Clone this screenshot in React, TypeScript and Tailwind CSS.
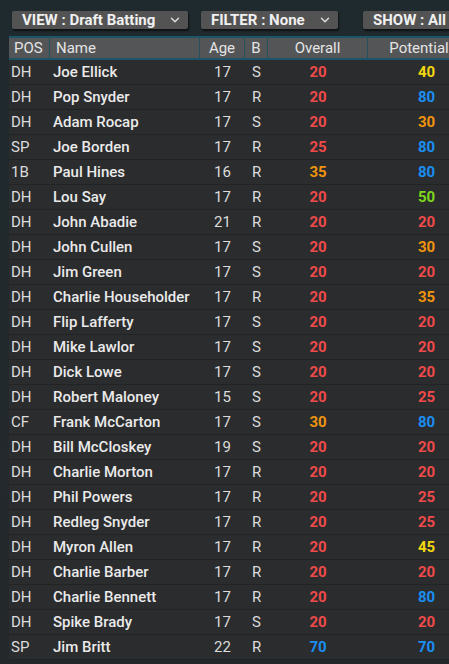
import { ChevronDown } from 'lucide-react';

type Player = [string, string, number, string, number, number];

const players: Player[] = [
    ['DH', 'Joe Ellick', 17, 'S', 20, 40],
    ['DH', 'Pop Snyder', 17, 'R', 20, 80],
    ['DH', 'Adam Rocap', 17, 'S', 20, 30],
    ['SP', 'Joe Borden', 17, 'R', 25, 80],
    ['1B', 'Paul Hines', 16, 'R', 35, 80],
    ['DH', 'Lou Say', 17, 'R', 20, 50],
    ['DH', 'John Abadie', 21, 'R', 20, 20],
    ['DH', 'John Cullen', 17, 'S', 20, 30],
    ['DH', 'Jim Green', 17, 'S', 20, 20],
    ['DH', 'Charlie Householder', 17, 'R', 20, 35],
    ['DH', 'Flip Lafferty', 17, 'S', 20, 20],
    ['DH', 'Mike Lawlor', 17, 'S', 20, 20],
    ['DH', 'Dick Lowe', 17, 'S', 20, 20],
    ['DH', 'Robert Maloney', 15, 'S', 20, 25],
    ['CF', 'Frank McCarton', 17, 'S', 30, 80],
    ['DH', 'Bill McCloskey', 19, 'S', 20, 20],
    ['DH', 'Charlie Morton', 17, 'R', 20, 20],
    ['DH', 'Phil Powers', 17, 'R', 20, 25],
    ['DH', 'Redleg Snyder', 17, 'R', 20, 25],
    ['DH', 'Myron Allen', 17, 'R', 20, 45],
    ['DH', 'Charlie Barber', 17, 'R', 20, 20],
    ['DH', 'Charlie Bennett', 17, 'R', 20, 80],
    ['DH', 'Spike Brady', 17, 'S', 20, 20],
    ['SP', 'Jim Britt', 22, 'R', 70, 70],
];

// rating -> colour, same scale the game uses
const ratingColor = (v: number) => {
    if (v >= 70) return 'text-[#1b8ef2]';
    if (v >= 50) return 'text-[#7fd61c]';
    if (v >= 40) return 'text-[#f2d60f]';
    if (v >= 30) return 'text-[#f0940f]';
    return 'text-[#ef4a4a]';
};

const cols = 'grid grid-cols-[41px_150px_45px_23px_100px_100px]';

function DropButton({ label, width, chevron = true }: { label: string; width: string; chevron?: boolean }) {
    return (
        <div className={`${width} h-[18px] shrink-0 flex items-center justify-between pl-[10px] pr-[6px] bg-[#535353] rounded-[2px] shadow-[1px_2px_2px_rgba(0,0,0,0.6)] text-[#f0f0f0] font-bold text-[15px] leading-none`}>
            <span className="whitespace-nowrap">{label}</span>
            {chevron && <ChevronDown size={14} strokeWidth={2.5} className="text-[#dcdcdc]" />}
        </div>
    );
}

export default function App() {
    return (
        <div className="w-[449px] h-[664px] overflow-hidden bg-gradient-to-b from-[#1f2a2e] to-[#24282b] font-['Roboto','Liberation_Sans',sans-serif]">
            {/* Toolbar */}
            <div className="flex items-start h-[36px] pt-[11px] pl-[12px]">
                <DropButton label="VIEW : Draft Batting" width="w-[176px]" />
                <div className="w-[13px] shrink-0" />
                <DropButton label="FILTER : None" width="w-[137px]" />
                <div className="w-[25px] shrink-0" />
                <DropButton label="SHOW : All" width="w-[120px]" chevron={false} />
            </div>

            {/* Table */}
            <div className="ml-[9px] w-[460px]">
                <div className={`${cols} h-[24px] bg-[#545557] border-t-2 border-b-2 border-[#1c5468] text-[15px] text-[#e4e4e4] leading-[20px]`}>
                    <div className="pl-[5px] border-r border-[#24505e]">POS</div>
                    <div className="pl-[6px] border-r border-[#24505e]">Name</div>
                    <div className="text-center border-r border-[#24505e]">Age</div>
                    <div className="text-center border-r border-[#24505e]">B</div>
                    <div className="text-center border-r border-[#24505e]">Overall</div>
                    <div className="text-center pl-[2px]">Potential</div>
                </div>

                {players.map(([pos, name, age, bats, ovr, pot]) => (
                    <div
                        key={name}
                        className={`${cols} h-[25px] items-center bg-[#2a2c2e] border-b border-[#212325] text-[15px] leading-none`}
                    >
                        <div className="pl-[2px] text-[#dcdcdc]">{pos}</div>
                        <div className="pl-[3px] text-[#eaeaea] font-medium whitespace-nowrap">{name}</div>
                        <div className="text-center text-[#dcdcdc]">{age}</div>
                        <div className="text-center text-[#dcdcdc]">{bats}</div>
                        <div className={`text-center font-bold ${ratingColor(ovr)}`}>{ovr}</div>
                        <div className={`text-center pl-[17px] font-bold ${ratingColor(pot)}`}>{pot}</div>
                    </div>
                ))}
            </div>
        </div>
    );
}
